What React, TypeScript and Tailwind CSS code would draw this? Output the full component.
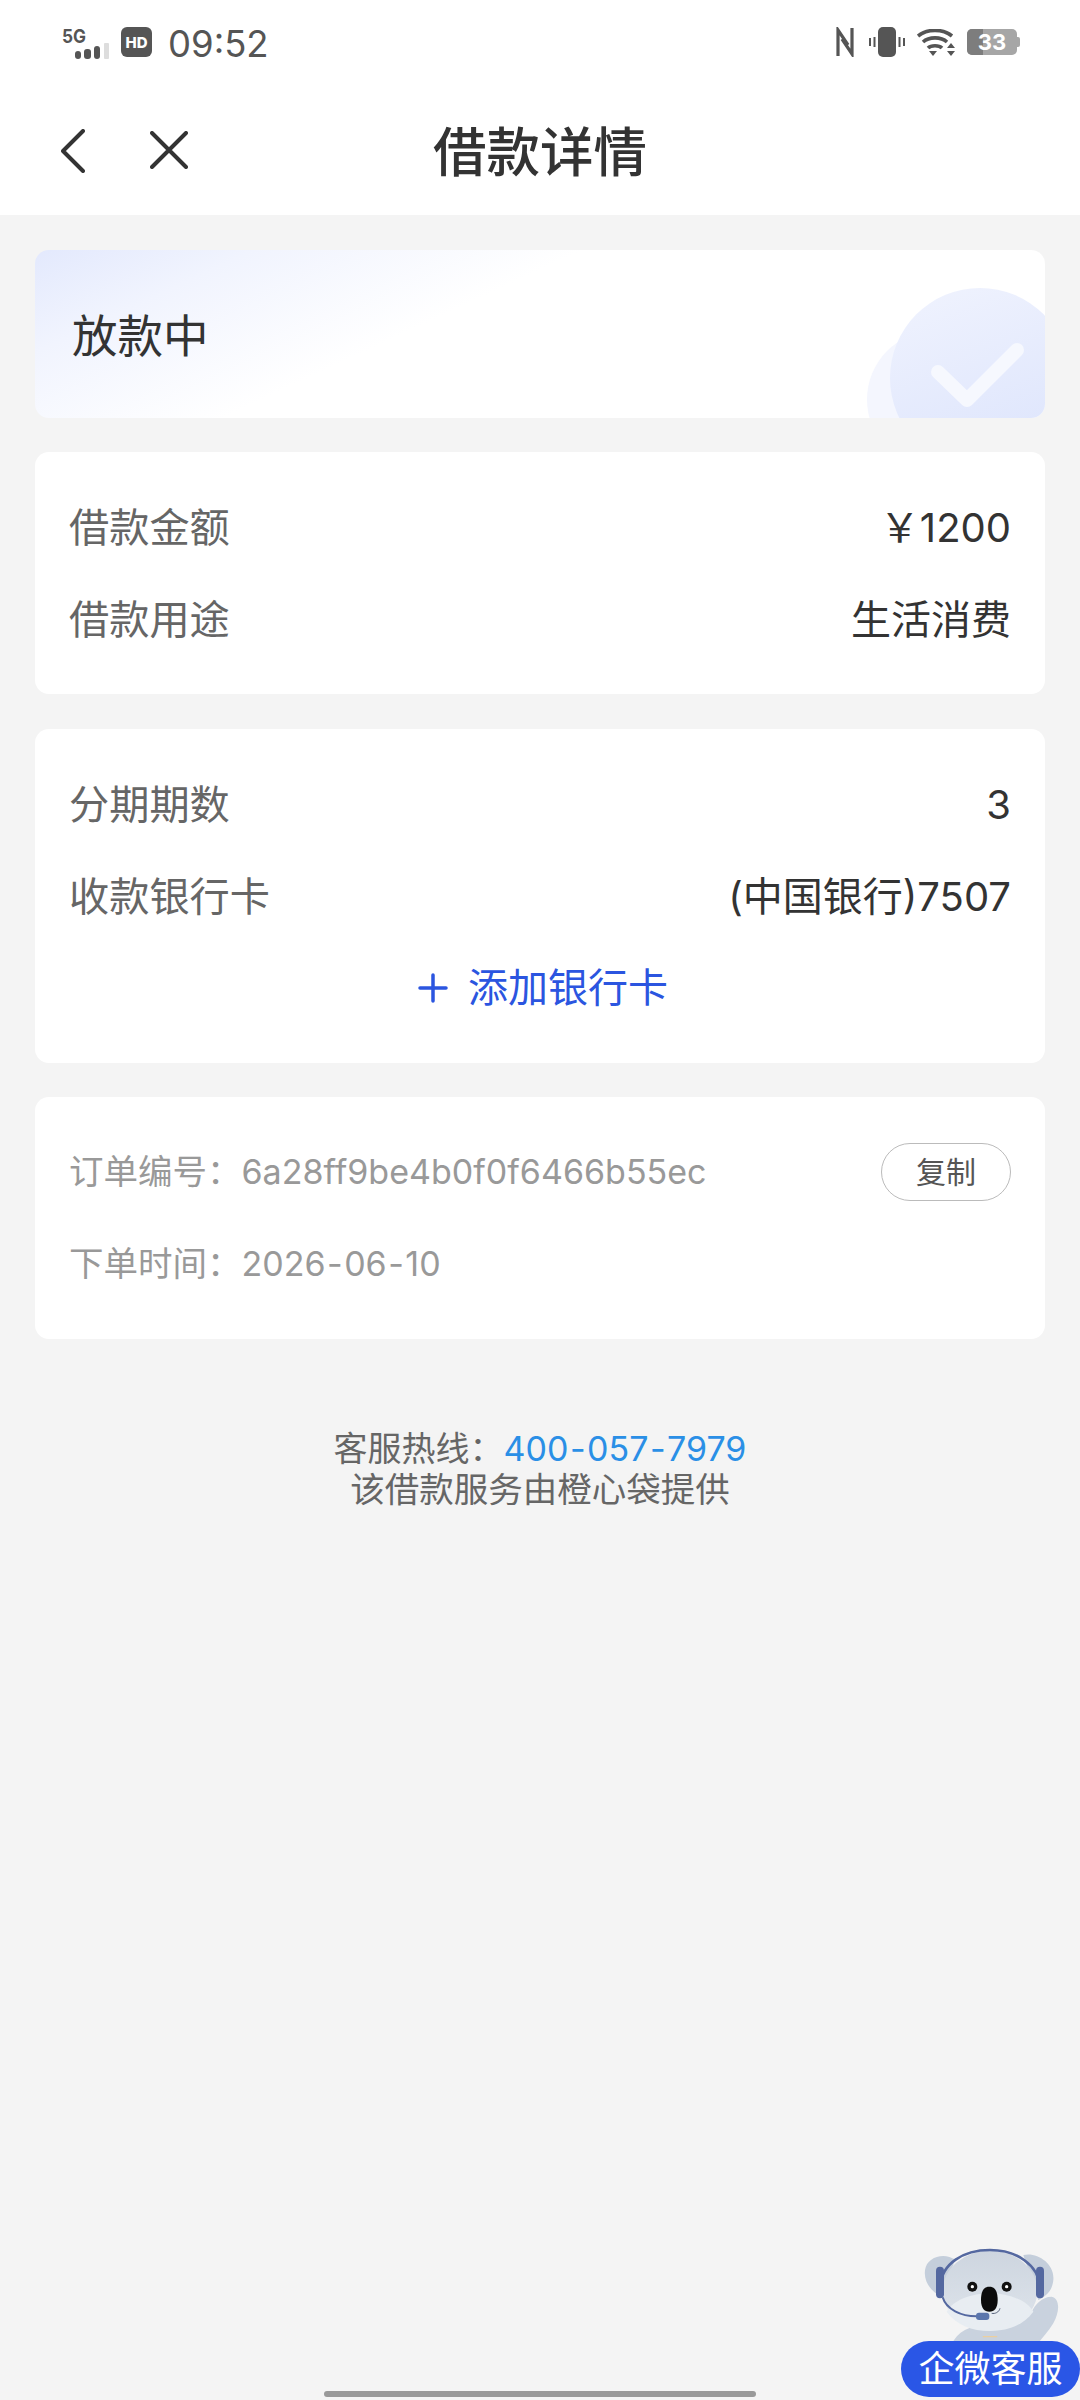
const font = { fontFamily: '"Inter", "Noto Sans CJK SC", sans-serif' };

const Dash = () => <span className="mx-[1.5px]">-</span>;

const StatusBar = () => (
  <div className="flex h-[84px] items-center justify-between pl-[62px] pr-[60px]">
    <div className="flex items-center">
      <svg width="48" height="36" viewBox="0 -4 48 36">
        <text x="0" y="15" fontSize="19" fontWeight="700" fill="#555" fontFamily="Inter" textLength="24" lengthAdjust="spacingAndGlyphs">5G</text>
        <rect x="13" y="23" width="6" height="8" rx="3" fill="#555" />
        <rect x="22" y="21" width="7" height="10" rx="3" fill="#555" />
        <rect x="32" y="18" width="6" height="13" rx="3" fill="#555" />
        <rect x="42" y="15" width="5" height="16" rx="1" fill="#ddd" />
      </svg>
      <div className="ml-[11px] flex h-[30px] w-[31px] items-center justify-center rounded-[6px] bg-[#555] text-[15px] font-extrabold leading-none text-white">HD</div>
      <span className="ml-[16px] mt-[4px] text-[36.5px] leading-none text-[#555]">09:52</span>
    </div>
    <div className="flex items-center">
      <svg width="18" height="30" viewBox="0 0 18 30" fill="none" stroke="#555" strokeWidth="3.2">
        <path d="M2 29V3l10 15" />
        <path d="M16 1v26L6 12" />
      </svg>
      <svg width="36" height="30" viewBox="0 0 36 30" className="ml-[15px]">
        <rect x="9" y="0" width="18" height="30" rx="5" fill="#555" />
        <rect x="4.5" y="10" width="2" height="10" fill="#555" />
        <rect x="0" y="11" width="2" height="8" fill="#555" />
        <rect x="29.5" y="10" width="2" height="10" fill="#555" />
        <rect x="34" y="11" width="2" height="8" fill="#555" />
      </svg>
      <svg width="38" height="27" viewBox="0 0 38 27" className="ml-[12px]" fill="none" stroke="#555" strokeWidth="3.6">
        <path d="M1 7C10 -0.5 26 -0.5 35 7" />
        <path d="M6 13C12 7.5 24 7.5 30 13" />
        <path d="M11 19C14 16 22 16 25 19" />
        <path d="M12 22h8l-4 5z" fill="#555" stroke="none" />
        <path d="M34 14l4 5h-8zM30 22h8l-4 5z" fill="#555" stroke="none" />
      </svg>
      <div className="relative ml-[12px] flex h-[26px] w-[50px] items-center justify-center overflow-hidden rounded-[5px] bg-[#a6a6a6] text-[22px] font-bold leading-none text-white">
        <div className="absolute inset-y-0 left-0 w-[16px] bg-[#7d7d7d]" />
        <span className="relative">33</span>
      </div>
      <div className="h-[10px] w-[3px] rounded-r-[2px] bg-[#a6a6a6]" />
    </div>
  </div>
);

const Row = ({ label, value }: { label: string; value: string }) => (
  <div className="flex h-[92px] items-center justify-between pt-[2px]">
    <span className="text-[40.2px] text-[#666]">{label}</span>
    <span className="text-[40px] text-[#333]">{value}</span>
  </div>
);

// coordinates follow a 3x crop of the mascot
const Koala = () => (
  <svg width="240" height="125" viewBox="0 0 720 375" className="absolute right-0 top-[2220px]">
    <defs>
      <linearGradient id="head" x1="0" y1="0" x2="0" y2="1">
        <stop offset="0" stopColor="#cdd5df" />
        <stop offset="1" stopColor="#dfe5ec" />
      </linearGradient>
    </defs>
    <path d="M255 150c5-40 60-55 90-30l-40 110c-25-10-55-40-50-80z" fill="#c4cedb" />
    <path d="M550 105c40-10 95 25 90 75-3 35-25 50-45 60z" fill="#c4cedb" />
    <path d="M335 375c15-40 55-60 110-60s95-10 130-40c10-20 30-45 60-45 25 5 25 45 5 80-15 25-35 45-50 65z" fill="#c9d2de" />
    <path d="M430 350h40" stroke="#eccf9f" strokeWidth="4" strokeLinecap="round" />
    <ellipse cx="450" cy="212" rx="142" ry="120" fill="url(#head)" />
    <path d="M320 275c20-35 75-55 130-55s110 20 130 55c-30 40-75 58-130 58s-100-18-130-58z" fill="#e8edf2" />
    <path d="M300 200C305 130 370 90 450 90s145 45 150 110" fill="none" stroke="#5468a0" strokeWidth="8" />
    <rect x="288" y="140" width="24" height="95" rx="12" fill="#5468a0" />
    <rect x="588" y="140" width="24" height="95" rx="12" fill="#5468a0" />
    <path d="M308 232c10 35 55 58 105 57" fill="none" stroke="#5468a0" strokeWidth="6" />
    <rect x="408" y="278" width="40" height="22" rx="9" fill="#5b76ac" />
    <circle cx="397" cy="200" r="15" fill="#111" />
    <circle cx="397" cy="200" r="5" fill="#fff" />
    <circle cx="500" cy="200" r="15" fill="#111" />
    <circle cx="500" cy="200" r="5" fill="#fff" />
    <path d="M448 200c-20 0-25 18-25 40 0 25 10 35 25 35s25-10 25-35c0-22-5-40-25-40z" fill="#0c0c0c" />
    <path d="M455 280c10 2 22-3 25-15" fill="none" stroke="#56627a" strokeWidth="3" />
  </svg>
);

export default function App() {
  return (
    <div className="relative h-[2400px] w-[1080px] overflow-hidden bg-[#f4f4f4]" style={font}>
      <div className="h-[215px] bg-white">
        <StatusBar />
        <div className="relative flex h-[131px] items-center justify-center pt-[7px]">
          <svg width="24" height="44" viewBox="0 0 24 44" fill="none" stroke="#333" strokeWidth="4" strokeLinecap="round" strokeLinejoin="round" className="absolute left-[61px] top-[45px]">
            <path d="M22 2L2 22l20 20" />
          </svg>
          <svg width="38" height="38" viewBox="0 0 38 38" fill="none" stroke="#333" strokeWidth="4" strokeLinecap="round" className="absolute left-[150px] top-[47px]">
            <path d="M2 2l34 34M36 2L2 36" />
          </svg>
          <h1 className="text-[53.5px] font-medium leading-none text-[#333]">借款详情</h1>
        </div>
      </div>

      <div className="flex flex-col gap-[34px] px-[35px] pt-[35px]">
        <div className="relative flex h-[168px] items-center overflow-hidden rounded-[14px] bg-[linear-gradient(155deg,#e3e9fd_0%,#f1f4fe_16%,#ffffff_40%)] pl-[37px] pt-[5px]">
          <span className="text-[45.5px] leading-none text-[#333]">放款中</span>
          <div className="absolute left-[832px] top-[81px] h-[137px] w-[137px] rounded-full bg-[#f4f6fe]" />
          <div className="absolute left-[855px] top-[38px] h-[180px] w-[180px] rounded-full bg-[linear-gradient(160deg,#f0f3fe,#dbe3fc)]" />
          <svg width="140" height="80" viewBox="0 0 140 80" fill="none" stroke="#f6f8fe" strokeWidth="14" strokeLinecap="round" strokeLinejoin="round" className="absolute left-[855px] top-[85px]">
            <path d="M48 37l29 28 50-50" />
          </svg>
        </div>

        <div className="rounded-[14px] bg-white px-[34px] py-[29px] leading-none">
          <Row label="借款金额" value="￥1200" />
          <Row label="借款用途" value="生活消费" />
        </div>

        <div className="mt-[1px] rounded-[14px] bg-white px-[34px] py-[29px] leading-none">
          <Row label="分期期数" value="3" />
          <Row label="收款银行卡" value="(中国银行)7507" />
          <div className="flex h-[92px] items-center justify-center pl-[6px]">
            <svg width="30" height="30" viewBox="0 0 30 30" stroke="#2b55e0" strokeWidth="3.5" strokeLinecap="round" className="mr-[20px]">
              <path d="M15 2v26M2 15h26" />
            </svg>
            <span className="text-[40px] text-[#2b55e0]">添加银行卡</span>
          </div>
        </div>

        <div className="flex flex-col gap-[34px] rounded-[14px] bg-white px-[34px] py-[46px] text-[34px] leading-none text-[#999]">
          <div className="flex h-[58px] items-center justify-between">
            <span><span className="text-[34.5px]">订单编号：</span>6a28ff9be4b0f0f6466b55ec</span>
            <button className="flex h-[58px] w-[130px] items-center justify-center rounded-full border border-[#bbb] text-[30px] text-[#555]">复制</button>
          </div>
          <div className="flex h-[58px] items-center">
            <span><span className="text-[34.5px]">下单时间：</span>2026<Dash />06<Dash />10</span>
          </div>
        </div>
      </div>

      <div className="mt-[89px] flex flex-col items-center text-[34.5px] leading-[41px] text-[#666]">
        <div className="text-[34px]">客服热线：<span className="text-[#2a8fe6]">400<Dash />057<Dash />7979</span></div>
        <div>该借款服务由橙心袋提供</div>
      </div>

      <Koala />
      <div className="absolute bottom-[3px] right-0 flex h-[56px] w-[179px] items-center justify-center rounded-full bg-[#2a56e6] text-[36px] leading-none text-white">企微客服</div>
      <div className="absolute bottom-[3px] left-[324px] h-[6px] w-[432px] rounded-full bg-[#999]" />
    </div>
  );
}
